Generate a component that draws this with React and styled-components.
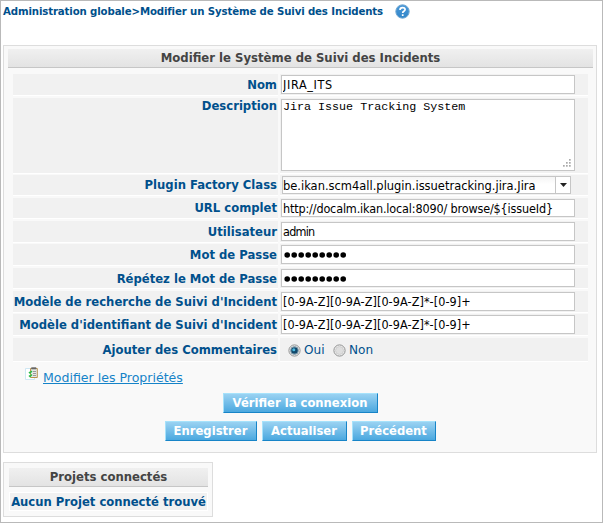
import React from "react";
import styled, { createGlobalStyle } from "styled-components";

const condensed = '"DejaVu Sans Condensed", "DejaVu Sans", sans-serif';
const wide = '"DejaVu Sans", Verdana, sans-serif';

const GlobalStyle = createGlobalStyle`
  * { box-sizing: border-box; }
  body { margin: 0; background: #fff; font-family: ${condensed}; }
`;

const Page = styled.main`
  width: 603px;
  height: 523px;
  padding: 0 0 0 2px;
  border: 1px solid #b9b9b9;
  background: #fff;
  overflow: hidden;
`;

const Breadcrumb = styled.nav`
  display: flex;
  align-items: center;
  height: 21px;
  margin-bottom: 23px;
  font: bold 10.2px/21px ${wide};
  letter-spacing: -0.13px;
  color: #00508c;
  white-space: pre;
  svg { margin-left: 12px; }
`;

const Panel = styled.section`
  width: ${(p) => p.$width}px;
  height: ${(p) => p.$height}px;
  padding: ${(p) => p.$padding};
  margin-bottom: 9px;
  background: #f9f9f9;
  border: 1px solid #ddd;
`;

const PanelTitle = styled.h2`
  height: ${(p) => p.$height}px;
  margin: 0 0 ${(p) => p.$gap}px;
  border-bottom: 1px solid #c6c6c6;
  background: linear-gradient(#f0f0f0, #e3e3e3);
  color: #444;
  font-size: 12.98px;
  line-height: 18px;
  text-align: center;
  white-space: nowrap;
`;

const Form = styled.form`
  width: 575px;
  margin-left: 5px;
`;

const Row = styled.div`
  display: grid;
  grid-template-columns: 265px 308px;
  column-gap: 2px;
  height: ${(p) => p.$height}px;
  margin-bottom: ${(p) => p.$gap}px;
`;

const Label = styled.label`
  display: flex;
  justify-content: flex-end;
  align-items: ${(p) => (p.$top ? "flex-start" : "center")};
  padding-right: 1px;
  padding-bottom: ${(p) => p.$lift || 0}px;
  background: #f1f1f1;
  box-shadow: 0 1px #fff;
  color: #00508c;
  font-size: 12.93px;
  font-weight: bold;
  line-height: 15px;
  white-space: nowrap;
`;

const Cell = styled.div`
  display: flex;
  align-items: flex-start;
  padding: 1px 0 0 1px;
  background: #f1f1f1;
  box-shadow: 0 1px #fff;
`;

const Input = styled.input`
  width: 294px;
  height: ${(p) => p.$height || 19}px;
  padding: 0 1px;
  border: 1px solid #c6c6c6;
  border-radius: 0;
  outline: 0;
  background: #fff;
  color: #000;
  font: 12.5px/17px ${condensed};
  letter-spacing: ${(p) => p.$spacing || 0}px;
`;

const PasswordBox = styled.div`
  display: flex;
  align-items: center;
  width: 294px;
  height: ${(p) => p.$height}px;
  padding: 1px 0 0 2px;
  border: 1px solid #c6c6c6;
  background: #fff;
`;

const TextBox = styled.div`
  display: flex;
  justify-content: space-between;
  width: 294px;
  height: 72px;
  padding: 0 2px 2px 1px;
  border: 1px solid #c6c6c6;
  background: #fff;
  color: #000;
  font: 11.7px/14px "Liberation Mono", monospace;
  white-space: pre;
  svg { align-self: flex-end; }
`;

const Select = styled.div`
  display: flex;
  width: 289px;
  height: 18px;
  margin-left: 1px;
  border: 1px solid #c6c6c6;
  background: linear-gradient(#f5f5f5, #fff 45%);
`;

const SelectText = styled.span`
  flex: 1;
  color: #000;
  font: 11.48px/18px ${wide};
  white-space: nowrap;
`;

const SelectArrow = styled.span`
  display: flex;
  align-items: center;
  justify-content: center;
  width: 15px;
  border-left: 1px solid #c6c6c6;
  background: #fff;
`;

const RadioGroup = styled.div`
  display: flex;
  align-items: center;
  height: 22px;
  padding-left: 7px;
  color: #00508c;
  font: 12.1px/20px ${wide};
`;

const RadioText = styled.span`
  width: ${(p) => p.$width}px;
  margin: 0 7px 0 3px;
  white-space: nowrap;
`;

const Properties = styled.div`
  display: flex;
  height: 31px;
  padding: 5px 0 0 12px;
`;

const Link = styled.a`
  margin-left: 5px;
  color: #1583c8;
  font: 12.55px/22px ${wide};
  text-decoration: underline;
  text-underline-offset: 1px;
  white-space: nowrap;
`;

const ButtonRow = styled.div`
  display: flex;
  justify-content: center;
  gap: 5px;
  margin-bottom: 8px;
  padding-right: 1px;
`;

const Button = styled.button`
  width: ${(p) => p.$width}px;
  height: 20px;
  padding: 0;
  border: 1px solid;
  border-color: #a6e2fb #1784c7 #1784c7 #a6e2fb;
  background: linear-gradient(#9ad2f2, #4ba8df);
  color: #fff;
  font: bold 11.6px/17px ${wide};
  white-space: nowrap;
`;

const EmptyMessage = styled.p`
  width: 199px;
  height: 19px;
  margin: 0;
  border: 1px solid #fff;
  background: #f1f1f1;
  color: #00508c;
  font-size: 12.9px;
  font-weight: bold;
  line-height: 17px;
  text-align: center;
  white-space: nowrap;
`;

const HelpIcon = () => (
  <svg width="15" height="15" viewBox="0 0 15 15">
    <defs>
      <linearGradient id="help" x2="0" y2="1">
        <stop stopColor="#4a98d8" />
        <stop offset="1" stopColor="#3186c9" />
      </linearGradient>
    </defs>
    <circle cx="7.5" cy="7.5" r="6.7" fill="url(#help)" stroke="#74a9d3" />
    <path d="M5 5.9c0-3.1 5.1-3.1 5.1-.3 0 1.7-2.4 1.7-2.4 3.3M7.7 10.3v1.6" fill="none" stroke="#fff" strokeWidth="1.7" />
  </svg>
);

const Dots = () => (
  <svg width="62" height="12" viewBox="0 0 62 12">
    {Array.from({ length: 9 }, (_, i) => (
      <circle key={i} cx={3.2 + i * 7} cy="6" r="2.8" fill="#000" />
    ))}
  </svg>
);

const Grip = () => (
  <svg width="9" height="9" viewBox="0 0 9 9" fill="#aaa">
    {[[6, 0], [6, 3], [3, 3], [6, 6], [3, 6], [0, 6]].map(([x, y]) => (
      <rect key={`${x}-${y}`} x={x} y={y} width="1.7" height="1.7" />
    ))}
  </svg>
);

const Radio = ({ checked }) => (
  <svg width="13" height="13" viewBox="0 0 13 13">
    <circle cx="6.5" cy="6.5" r="5.6" fill="#f4f4f4" stroke="#8e8f8f" />
    <circle cx="6.5" cy="6.5" r="4" fill={checked ? "#c5dbe6" : "#dedede"} stroke={checked ? "#6d8490" : "#c8c8c8"} strokeWidth=".8" />
    {checked && <circle cx="6.5" cy="6.5" r="3.3" fill="#12486b" />}
    {checked && <circle cx="5.8" cy="5.8" r="1.5" fill="#4dbbe2" />}
  </svg>
);

const PropertiesIcon = () => (
  <svg width="13" height="15" viewBox="0 0 13 15">
    <path d="M.5 1.5h9v11h-9z" fill="#fff" stroke="#cfe7f3" />
    <path d="M5.5 1.5h6.8v9H5.5z" fill="#e6e8e6" stroke="#b8944f" />
    <path d="M6.3.3h4.9v2H6.3z" fill="#666" />
    <path d="M4 5l1 1 2-2M4 8.5l1 1 2-2" fill="none" stroke="#29bd48" strokeWidth="1.5" />
    <path d="M8 4.5h3M8 6.5h3M8 8.5h3" stroke="#999" />
  </svg>
);

const Field = ({ label, height, gap, top, lift, children }) => (
  <Row $height={height} $gap={gap}>
    <Label $top={top} $lift={lift}>{label}</Label>
    <Cell>{children}</Cell>
  </Row>
);

export default function App() {
  const pattern = "[0-9A-Z][0-9A-Z][0-9A-Z]*-[0-9]+";
  return (
    <Page>
      <GlobalStyle />
      <Breadcrumb>
        Administration globale&gt;Modifier un Système de Suivi des Incidents
        <HelpIcon />
      </Breadcrumb>
      <Panel $width={594} $height={408} $padding="3px 3px 0 4px">
        <PanelTitle $height={19} $gap={6}>Modifier le Système de Suivi des Incidents</PanelTitle>
        <Form>
          <Field label="Nom" height={21} gap={3}>
            <Input defaultValue="JIRA_ITS" $spacing={0.65} />
          </Field>
          <Field label="Description" height={75} gap={2} top>
            <TextBox>Jira Issue Tracking System<Grip /></TextBox>
          </Field>
          <Field label="Plugin Factory Class" height={20} gap={3} lift={2}>
            <Select>
              <SelectText>be.ikan.scm4all.plugin.issuetracking.jira.Jira</SelectText>
              <SelectArrow>
                <svg width="7" height="4" viewBox="0 0 7 4"><path d="M0 0h7L3.5 4z" fill="#222" /></svg>
              </SelectArrow>
            </Select>
          </Field>
          <Field label="URL complet" height={20} gap={3} lift={2}>
            <Input defaultValue="http://docalm.ikan.local:8090/ browse/${issueId}" $spacing={-0.15} $height={18} />
          </Field>
          <Field label="Utilisateur" height={21} gap={2}>
            <Input defaultValue="admin" $spacing={-0.75} />
          </Field>
          <Field label="Mot de Passe" height={21} gap={3}>
            <PasswordBox $height={19}><Dots /></PasswordBox>
          </Field>
          <Field label="Répétez le Mot de Passe" height={20} gap={3}>
            <PasswordBox $height={18}><Dots /></PasswordBox>
          </Field>
          <Field label="Modèle de recherche de Suivi d'Incident" height={21} gap={2}>
            <Input defaultValue={pattern} $spacing={0.08} />
          </Field>
          <Field label="Modèle d'identifiant de Suivi d'Incident" height={21} gap={3}>
            <Input defaultValue={pattern} $spacing={0.08} />
          </Field>
          <Field label="Ajouter des Commentaires" height={23} gap={1}>
            <RadioGroup>
              <Radio checked /><RadioText $width={22}>Oui</RadioText>
              <Radio /><RadioText $width={26}>Non</RadioText>
            </RadioGroup>
          </Field>
          <Properties>
            <PropertiesIcon />
            <Link>Modifier les Propriétés</Link>
          </Properties>
        </Form>
        <ButtonRow>
          <Button $width={155}>Vérifier la connexion</Button>
        </ButtonRow>
        <ButtonRow>
          <Button $width={92}>Enregistrer</Button>
          <Button $width={85}>Actualiser</Button>
          <Button $width={84}>Précédent</Button>
        </ButtonRow>
      </Panel>
      <Panel $width={210} $height={55} $padding="5px 4px 0 5px">
        <PanelTitle $height={19} $gap={5}>Projets connectés</PanelTitle>
        <EmptyMessage>Aucun Projet connecté trouvé</EmptyMessage>
      </Panel>
    </Page>
  );
}
